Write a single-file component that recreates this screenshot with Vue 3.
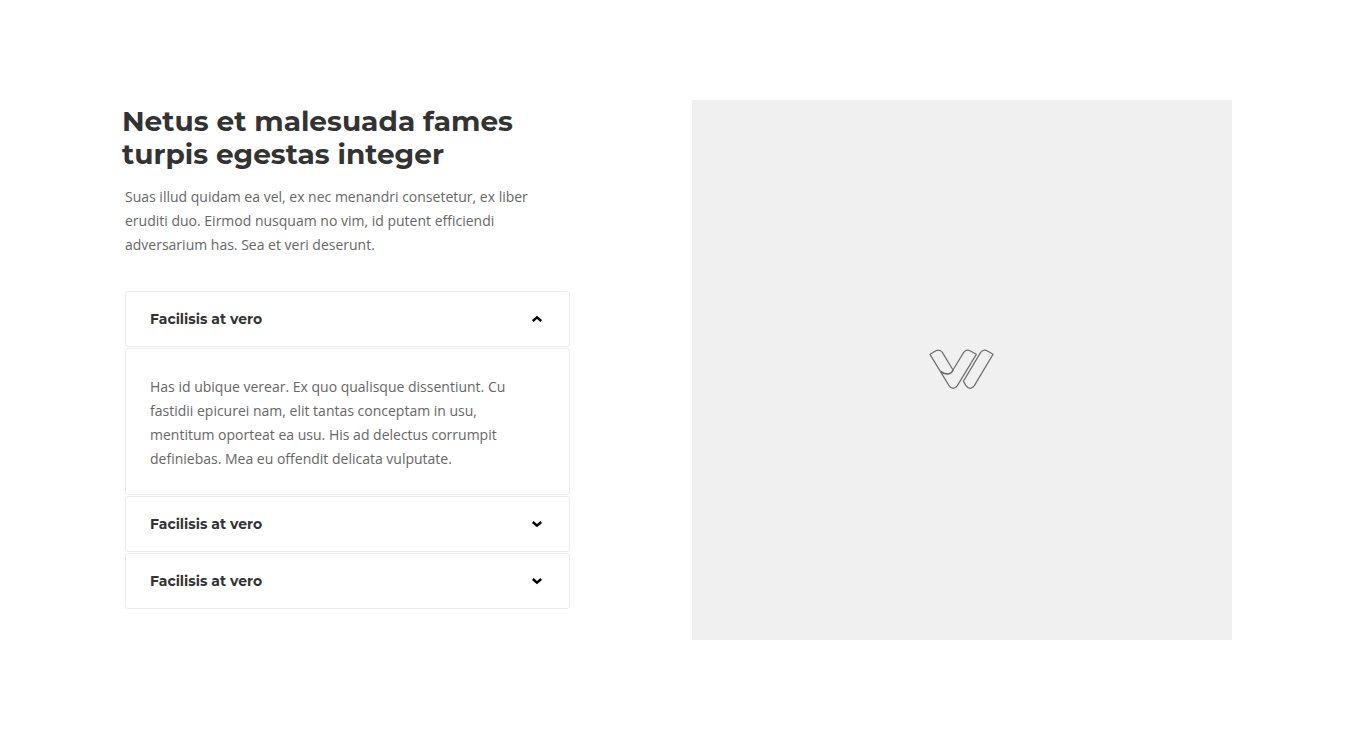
<script setup>
import { ref } from 'vue'

const items = [
  {
    title: 'Facilisis at vero',
    text: 'Has id ubique verear. Ex quo qualisque dissentiunt. Cu fastidii epicurei nam, elit tantas conceptam in usu, mentitum oporteat ea usu. His ad delectus corrumpit definiebas. Mea eu offendit delicata vulputate.',
  },
  {
    title: 'Facilisis at vero',
    text: 'Suas illud quidam ea vel, ex nec menandri consetetur.',
  },
  {
    title: 'Facilisis at vero',
    text: 'Eirmod nusquam no vim, id putent efficiendi adversarium has.',
  },
]

const open = ref(0)

function toggle(index) {
  open.value = open.value === index ? -1 : index
}
</script>

<template>
  <main class="section">
    <div class="intro">
      <h1 class="title">Netus et malesuada fames turpis egestas integer</h1>
      <p class="lead">
        Suas illud quidam ea vel, ex nec menandri consetetur, ex liber eruditi duo. Eirmod nusquam
        no vim, id putent efficiendi adversarium has. Sea et veri deserunt.
      </p>
      <div class="accordion">
        <template v-for="(item, index) in items" :key="index">
          <button
            :id="`toggle-${index}`"
            class="toggle"
            type="button"
            :aria-expanded="open === index"
            :aria-controls="`panel-${index}`"
            @click="toggle(index)"
          >
            <span>{{ item.title }}</span>
            <svg class="chevron" viewBox="0 0 12 12" aria-hidden="true">
              <path :d="open === index ? 'M1.8 8 L6 4.3 L10.2 8' : 'M1.8 4 L6 7.7 L10.2 4'" />
            </svg>
          </button>
          <div
            v-if="open === index"
            :id="`panel-${index}`"
            class="panel"
            role="region"
            :aria-labelledby="`toggle-${index}`"
          >
            {{ item.text }}
          </div>
        </template>
      </div>
    </div>
    <div class="media">
      <svg class="logo" viewBox="51 39 210 135" role="img" aria-label="Logo">
        <path
          d="M60 58 L78 47 C86 43 92 45 97 52 L129 105 L161 52 C166 45 172 43 180 47 L199 58 L142 152 C135 163 124 163 117 152 Z"
        />
        <path d="M92 109 C106 121 124 119 129 105" class="fold" />
        <path
          d="M160 139 L212 52 C217 45 223 43 231 47 L249 58 L193 152 C186 163 175 163 168 152 Z"
        />
      </svg>
    </div>
  </main>
</template>

<style>
body {
  margin: 0;
  background: #fff;
}
</style>

<style scoped>
.section {
  display: grid;
  grid-template-columns: minmax(0, 445fr) minmax(0, 540fr);
  column-gap: 122px;
  align-items: start;
  box-sizing: border-box;
  padding: 100px 128px 100px 125px;
  font-family: 'Open Sans', 'Noto Sans', sans-serif;
  font-size: 14px;
  line-height: 24px;
  color: #666;
}

.intro {
  padding-top: 5px;
}

.title {
  margin: 0 0 14px -3px;
  font-family: Montserrat, Inter, sans-serif;
  font-size: 28px;
  font-weight: 700;
  line-height: 33px;
  color: #333;
}

.lead {
  margin: 0 0 34px;
}

.accordion {
  display: flex;
  flex-direction: column;
  gap: 1px;
}

.toggle {
  display: flex;
  align-items: center;
  justify-content: space-between;
  padding: 15px 26px 15px 24px;
  border: 1px solid #ededed;
  border-radius: 3px;
  background: #fff;
  font-family: Montserrat, Inter, sans-serif;
  font-size: 14px;
  font-weight: 700;
  line-height: 24px;
  color: #333;
  text-align: left;
  cursor: pointer;
}

.chevron {
  width: 12px;
  height: 12px;
  fill: none;
  stroke: #000;
  stroke-width: 2.4;
}

.panel {
  padding: 26px 24px 23px;
  border: 1px solid #ededed;
  border-radius: 3px;
}

.media {
  display: flex;
  align-items: center;
  justify-content: center;
  aspect-ratio: 1;
  background: #f0f0f0;
}

.logo {
  width: 70px;
  height: 45px;
  fill: none;
  stroke: #6e6e6e;
  stroke-width: 3.6;
  stroke-linejoin: round;
}

.fold {
  stroke: #666;
  stroke-width: 4.5;
}
</style>
